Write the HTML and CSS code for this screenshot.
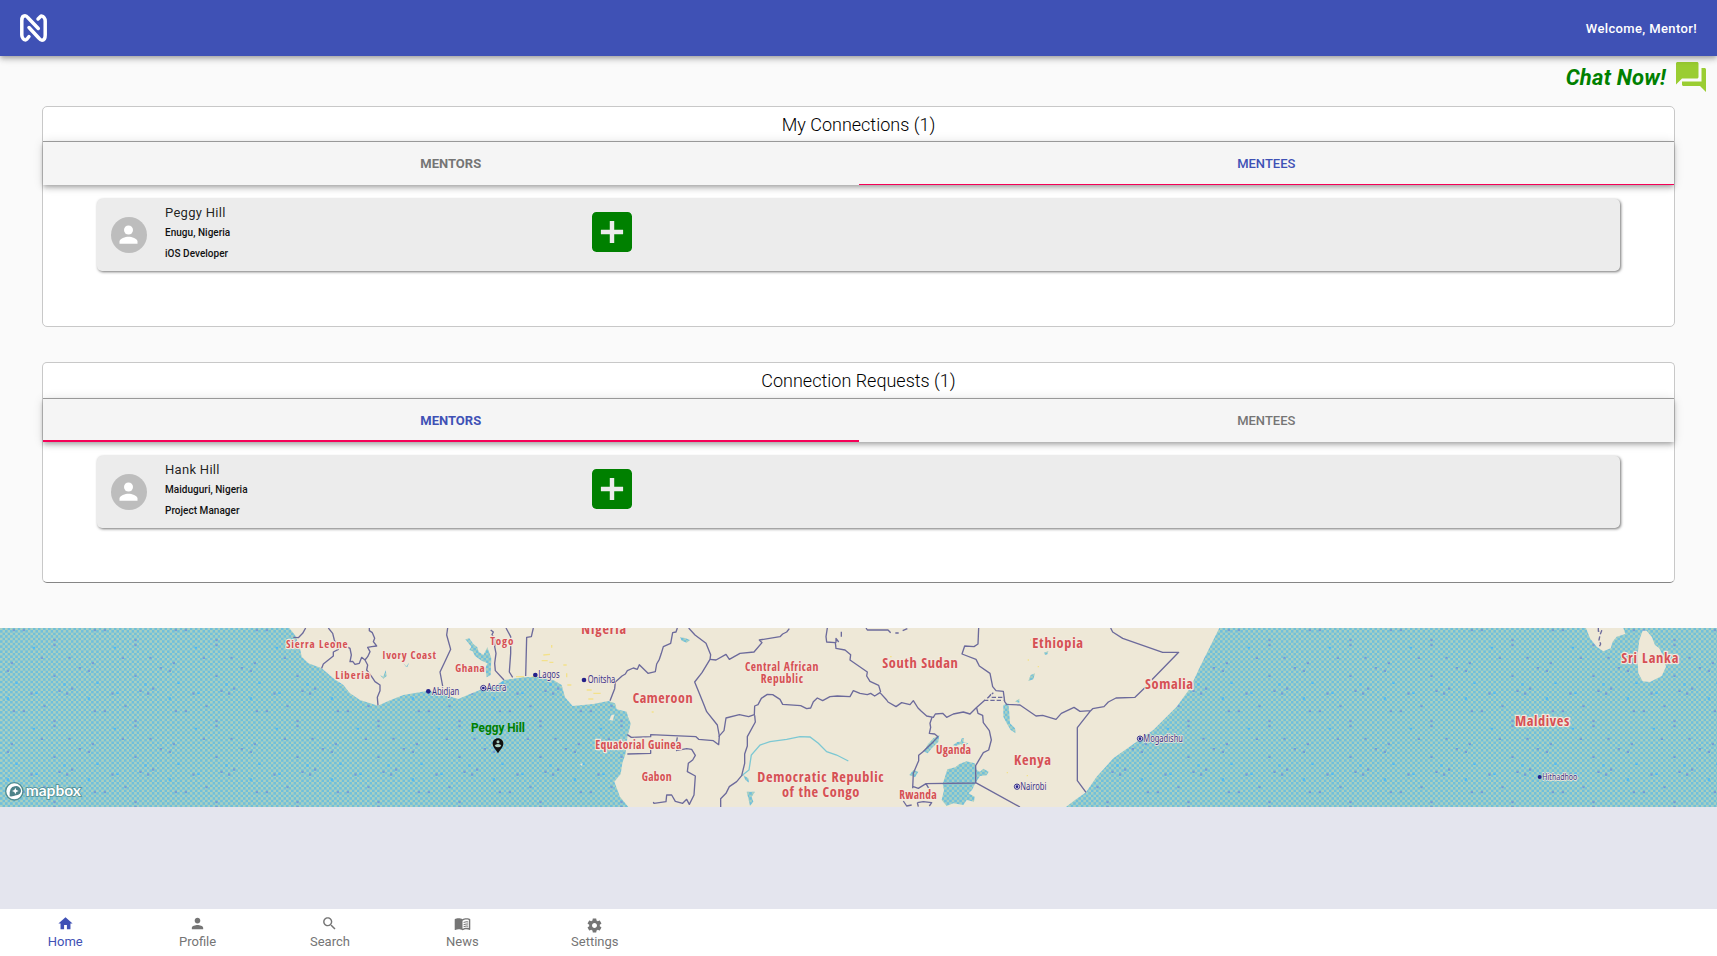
FILE: index.html
```html
<!DOCTYPE html>
<html lang="en">
<head>
<meta charset="utf-8">
<title>Mentor Home</title>
<link rel="stylesheet" href="styles.css">
</head>
<body>
<header class="appbar">
  <svg class="logo" viewBox="0 0 27 28" fill="none" stroke="#fff" stroke-width="3.5" stroke-linecap="round" stroke-linejoin="round"><path d="M9 22.5L7 25Q5 27 3 24.5Q1.800 23 1.800 21V6.500Q1.800 1.800 5 1.800Q6.500 1.800 8 3.800L18.300 14.500"/><path d="M18 5L20 3Q22 1 24 3.500Q25.200 5 25.200 7V21Q25.200 26.200 22 26.200Q20.500 26.200 19 24.200L9 13.500"/></svg>
  <span class="welcome">Welcome, Mentor!</span>
</header>
<div class="chat">
  <span class="chat-text">Chat Now!</span>
  <svg class="chat-icon" viewBox="2 2 20 20"><path d="M21 6h-2v9H6v2c0 .55.45 1 1 1h11l4 4V7c0-.55-.45-1-1-1zm-4 6V3c0-.55-.45-1-1-1H3c-.55 0-1 .45-1 1v14l4-4h10c.55 0 1-.45 1-1z"/></svg>
</div>
<main class="cards">
  <section class="card">
    <h2 class="card-title">My Connections (1)</h2>
    <div class="tabs">
      <div class="tab strong">MENTORS</div>
      <div class="tab active thin">MENTEES</div>
    </div>
    <div class="person">
      <svg class="avatar" viewBox="0 0 36 36"><circle cx="18" cy="18" r="18" fill="#bdbdbd"/><circle cx="17.500" cy="13" r="4.500" fill="#fff"/><path fill="#fff" d="M8.500 26.800v-2.300c0-3 6-4.700 9-4.700s9 1.700 9 4.700v2.300z"/></svg>
      <div class="info"><div class="name">Peggy Hill</div><div class="meta">Enugu, Nigeria</div><div class="meta">iOS Developer</div></div>
      <svg class="add" viewBox="3 3 18 18"><path d="M19 3H5c-1.110 0-2 .9-2 2v14c0 1.100.89 2 2 2h14c1.100 0 2-.9 2-2V5c0-1.100-.9-2-2-2zm-2 10h-4v4h-2v-4H7v-2h4V7h2v4h4v2z"/></svg>
    </div>
  </section>
  <section class="card last">
    <h2 class="card-title">Connection Requests (1)</h2>
    <div class="tabs">
      <div class="tab active strong">MENTORS</div>
      <div class="tab">MENTEES</div>
    </div>
    <div class="person">
      <svg class="avatar" viewBox="0 0 36 36"><circle cx="18" cy="18" r="18" fill="#bdbdbd"/><circle cx="17.500" cy="13" r="4.500" fill="#fff"/><path fill="#fff" d="M8.500 26.800v-2.300c0-3 6-4.700 9-4.700s9 1.700 9 4.700v2.300z"/></svg>
      <div class="info"><div class="name">Hank Hill</div><div class="meta">Maiduguri, Nigeria</div><div class="meta">Project Manager</div></div>
      <svg class="add" viewBox="3 3 18 18"><path d="M19 3H5c-1.110 0-2 .9-2 2v14c0 1.100.89 2 2 2h14c1.100 0 2-.9 2-2V5c0-1.100-.9-2-2-2zm-2 10h-4v4h-2v-4H7v-2h4V7h2v4h4v2z"/></svg>
    </div>
  </section>
</main>
<svg class="map" viewBox="0 24 5151 537" preserveAspectRatio="none">
  <defs>
    <pattern id="check" width="15.1875" height="15.1875" patternUnits="userSpaceOnUse"><rect width="15.2" height="15.2" fill="#a9d0c1"/><rect width="7.600" height="7.600" fill="#70bfdb"/><rect x="7.600" y="7.600" width="7.600" height="7.600" fill="#70bfdb"/></pattern>
    <pattern id="specks" width="243" height="243" patternUnits="userSpaceOnUse"><path fill="#779fd2" d="M38 27h7v7h-7zM68 27h7v7h-7zM160 57h7v7h-7zM160 72h7v7h-7zM205 110h7v7h-7zM32 126h7v7h-7zM236 141h7v7h-7zM122 110h7v7h-7zM20 149h7v7h-7zM175 209h7v7h-7zM213 202h7v7h-7zM198 217h7v7h-7zM160 164h7v7h-7zM91 217h7v7h-7zM130 12h7v7h-7z"/><path fill="#55baf0" d="M20 232h7v9h-7zM106 215h7v7h-7zM98 80h7v7h-7zM190 190h7v7h-7zM46 185h7v7h-7z"/></pattern>
  </defs>
  <rect y="24" width="5151" height="537" fill="url(#check)"/>
  <rect y="24" width="5151" height="537" fill="url(#specks)"/>
  <g class="land">
    <path d="M868 24L885 45L900 85L905 110L925 130L965 145L1000 175L1030 195L1050 220L1080 240L1134 257L1165 243L1210 225L1285 212L1335 225L1375 237L1410 222L1440 210L1490 195L1512 180L1570 172L1610 170L1660 180L1685 195L1695 232L1718 258L1780 252L1825 243L1845 250L1850 268L1880 275L1884 290L1892 310L1888 330L1883 345L1877 400L1867 430L1862 462L1843 485L1860 530L1885 561H3198L3225 540L3258 517L3290 470L3340 415L3410 365L3460 330L3530 260L3570 205L3600 140L3630 80L3658 24Z"/>
    <path d="M4758 24L4770 55L4790 80L4810 94L4832 85L4838 65L4850 50L4876 42L4870 24ZM4928 32L4940 32L4955 50L4965 75L4978 85L4990 110L4998 140L4985 168L4950 186L4928 184L4915 160L4912 110L4918 60ZM1828 300L1835 284L1843 284L1838 302ZM1740 433L1748 430L1746 438Z"/>
  </g>
  <g class="lakes">
    <path d="M1396 58L1408 55L1420 72L1432 82L1436 95L1450 105L1458 90L1462 82L1474 115L1472 165L1460 172L1456 145L1462 130L1445 122L1425 108L1418 94L1408 90L1414 80Z"/>
    <path d="M2040 52L2055 54L2070 60L2060 68L2045 62ZM1140 165L1150 170L1157 150L1160 168L1150 176ZM1210 130L1218 140L1227 128L1222 142Z"/>
    <path d="M2835 470L2842 448L2866 442L2878 432L2900 424L2924 430L2930 450L2940 455L2950 446L2966 455L2960 466L2940 468L2926 490L2916 510L2906 520L2924 530L2922 545L2900 540L2890 555L2860 550L2840 558L2825 540L2832 510L2828 492ZM2772 395L2782 375L2800 355L2818 345L2815 365L2795 385L2783 400ZM2728 465L2740 450L2755 455L2745 472ZM2858 376L2872 366L2882 365L2885 355L2892 355L2890 366L2905 370L2895 378L2882 372L2868 378Z"/>
    <path d="M3010 255L3025 250L3028 280L3030 310L3045 325L3047 340L3032 330L3020 310L3010 290ZM3132 98L3145 93L3142 103L3135 105ZM3085 183L3092 165L3105 160L3100 178ZM3045 245L3058 236L3058 248Z"/>
    <path d="M2240 515L2265 515L2255 530L2260 545L2250 558L2245 535ZM2230 465L2245 475L2247 488L2236 480Z"/>
    <path class="river" d="M2225 467L2247 450L2254 405L2280 375L2310 365L2360 358L2400 350L2430 351L2455 370L2480 395L2510 405L2545 423"/>
  </g>
  <path class="specks" d="M1655 75v8M1630 105l20-2M1625 122h18M1648 127h12M1690 135h10M1700 160v12M1702 195h12M1760 210h15M1765 237h15M1780 220h22M1955 276h6M1595 170h16M1548 170h24M3090 60h3M3083 120h4M3113 140h4M3080 467h4M3020 458h4M2670 110h5"/>
  <g class="borders">
    <path d="M917 24L908 40L895 53L880 52M985 24L998 40L1003 60L1015 88L1000 96V108L970 132L965 145M1040 80L1050 85L1054 105L1050 125L1058 124L1065 133L1078 130L1085 112L1095 120L1103 110L1110 95L1103 82L1115 80L1130 78L1120 65L1124 55L1117 38L1108 32V24M1095 120L1103 135L1100 150L1115 170L1125 185L1140 195V212L1132 232L1134 256"/>
    <path d="M1343 24L1340 45L1352 88L1336 122L1320 156L1328 198M1472 30L1480 36L1476 44L1486 60L1484 80L1488 100L1484 130L1486 152L1512 180M1518 24L1532 50V100L1528 156L1538 172M1600 24L1594 50L1580 52L1577 168M2032 24L2028 36L2018 38L2012 70L1990 80L1984 100L1978 118L1970 132L1966 155L1944 160L1924 140L1918 134L1912 148L1900 144L1882 152L1876 162L1866 168L1846 186L1844 206L1830 242"/>
    <path d="M2066 24L2085 45L2118 70L2132 104L2130 118L2106 158L2084 186L2096 215L2110 250L2120 275L2152 315L2158 348L2156 374L2140 362L2096 358L2088 350L1952 344V350L1894 352L1882 344M1952 384V400L1882 402M2032 352L2028 374M2028 392L2060 386L2075 388L2086 406L2078 420L2065 430L2062 455L2086 468L2082 525L2068 553L2060 538L2048 550L2026 544L2015 525H2000L1998 545L1962 550L1960 546"/>
    <path d="M2130 118L2148 120L2178 103L2188 118L2220 100L2262 96L2286 68L2278 60L2340 50L2348 42L2360 36L2368 26M2156 350L2172 332L2178 294L2218 284L2246 290L2263 284L2264 258L2274 254L2284 235L2302 223L2318 224L2340 238L2348 253L2402 257L2420 266L2432 264L2440 245L2452 234L2468 242L2490 230L2512 228L2550 230L2560 212L2580 220L2602 224L2612 220L2624 228L2640 218L2660 240L2664 246L2688 260L2705 248L2730 254L2740 242L2754 264L2764 274L2780 288L2800 292L2806 282L2828 280L2840 292L2860 282L2890 276L2910 282L2928 264L2955 240M2264 286L2266 306L2242 350V378L2234 402V430L2225 467L2210 485L2188 500L2178 520L2162 536V561"/>
    <path d="M2482 24L2478 50L2480 66L2506 68L2508 85L2535 90L2552 104L2550 120L2602 156L2600 168L2610 184L2636 196L2642 216M2508 68V55L2516 66M2524 35V50M2598 24L2602 30H2664L2672 38M2686 39H2696M2708 32L2722 26M2936 24L2934 72L2922 80L2894 78L2886 102L2928 118L2938 138L2970 160L2978 200L2988 212L3010 214L3014 245L3020 253L3060 255L3108 288L3128 286L3168 298L3184 280L3222 262L3240 274L3272 272L3278 266L3312 260L3325 246L3348 234L3405 232L3440 198M3332 24L3338 36L3368 55L3488 97H3536L3455 180M3272 272L3232 323V482L3258 517M2930 264L2934 280L2948 286L2950 308L2968 332L2974 360L2966 390L2950 398L2927 437V488L3060 561M2927 489L2778 491L2755 505L2740 500M2796 292L2790 310L2792 322L2788 340L2804 342L2814 350L2800 365L2768 396L2756 406V422L2740 460L2738 505M2778 491L2788 508"/>
    <path class="dash" d="M2952 241H3010M2965 233L2975 220M2975 232L3000 232L3014 232M2962 235L2980 218"/>
    <path class="dash" d="M4795 24V34L4805 32L4800 45L4797 60L4802 72L4796 84"/>
    <path d="M2710 543L2720 558L2735 555M2752 548L2770 545L2795 548L2788 558M2752 548L2755 560"/>
  </g>
  <g class="country">
    <text x="858" y="84" textLength="185" font-size="33">Sierra Leone</text>
    <text x="1006" y="176" textLength="104" font-size="33">Liberia</text>
    <text x="1147" y="117" textLength="161" font-size="33">Ivory Coast</text>
    <text x="1366" y="157" textLength="88" font-size="33">Ghana</text>
    <text x="1471" y="75" textLength="69" font-size="33">Togo</text>
    <text x="1744" y="43" textLength="134" font-size="42">Nigeria</text>
    <text x="1898" y="250" textLength="180" font-size="42">Cameroon</text>
    <text x="1786" y="386" textLength="258" font-size="35">Equatorial Guinea</text>
    <text x="1925" y="482" textLength="90" font-size="35">Gabon</text>
    <text x="2235" y="154" textLength="220" font-size="35">Central African</text>
    <text x="2282" y="189" textLength="127" font-size="35">Republic</text>
    <text x="2647" y="144" textLength="226" font-size="43">South Sudan</text>
    <text x="2272" y="487" textLength="379" font-size="43">Democratic Republic</text>
    <text x="2346" y="531" textLength="232" font-size="43">of the Congo</text>
    <text x="2808" y="401" textLength="105" font-size="35">Uganda</text>
    <text x="2698" y="537" textLength="112" font-size="35">Rwanda</text>
    <text x="3097" y="84" textLength="152" font-size="43">Ethiopia</text>
    <text x="3435" y="208" textLength="144" font-size="43">Somalia</text>
    <text x="3042" y="436" textLength="111" font-size="43">Kenya</text>
    <text x="4864" y="129" textLength="171" font-size="43">Sri Lanka</text>
    <text x="4545" y="319" textLength="163" font-size="43">Maldives</text>
  </g>
  <g class="city">
    <text x="1296" y="224" textLength="82" lengthAdjust="spacingAndGlyphs">Abidjan</text>
    <text x="1460" y="214" textLength="59" lengthAdjust="spacingAndGlyphs">Accra</text>
    <text x="1615" y="175" textLength="64" lengthAdjust="spacingAndGlyphs">Lagos</text>
    <text x="1763" y="188" textLength="83" lengthAdjust="spacingAndGlyphs">Onitsha</text>
    <text x="3430" y="365" textLength="119" lengthAdjust="spacingAndGlyphs">Mogadishu</text>
    <text x="3061" y="509" textLength="78" lengthAdjust="spacingAndGlyphs">Nairobi</text>
    <text x="4627" y="479" textLength="105" lengthAdjust="spacingAndGlyphs" font-size="28">Hithadhoo</text>
  </g>
  <g class="dots"><circle cx="1285" cy="214" r="7"/><circle cx="1606" cy="165" r="7"/><circle cx="1752" cy="180" r="7"/><circle cx="4619" cy="471" r="6"/></g>
  <g class="capitals"><circle cx="1450" cy="204" r="8"/><circle cx="3420" cy="356" r="8"/><circle cx="3051" cy="500" r="8"/></g>
  <g class="capital-dots"><circle cx="1450" cy="204" r="4"/><circle cx="3420" cy="356" r="4"/><circle cx="3051" cy="500" r="4"/></g>
  <text class="marker-name" x="1413" y="336" textLength="162" lengthAdjust="spacingAndGlyphs">Peggy Hill</text>
  <g transform="translate(1478 355)"><path fill="#111" d="M16 0C7 0 0 7 0 16C0 27 11 35 16 45C21 35 32 27 32 16C32 7 25 0 16 0Z"/><circle cx="16" cy="10" r="4.500" fill="#a9d0c1"/><path fill="#a9d0c1" d="M6 22Q8 17 16 17T26 22Q22 27 16 27T6 22Z"/></g>
  <g class="mapbox"><circle cx="43" cy="514" r="26" fill="#fff" stroke="#518d91" stroke-width="4"/><path fill="#4d8288" d="M29 529Q27 500 44 499A14 14 0 1 1 48 526Q40 530 29 529Z"/><path fill="#fff" d="M46 503L49 510L56 513L49 516L46 523L43 516L36 513L43 510Z"/><text x="77" y="528" textLength="166" lengthAdjust="spacingAndGlyphs">mapbox</text></g>
</svg>
<nav class="nav">
  <a class="nav-item current"><svg viewBox="0 0 24 24"><path d="M10 20v-6h4v6h5v-8h3L12 3 2 12h3v8z"/></svg><span>Home</span></a>
  <a class="nav-item"><svg viewBox="0 0 24 24"><path d="M12 12c2.210 0 4-1.790 4-4s-1.790-4-4-4-4 1.790-4 4 1.790 4 4 4zm0 2c-2.670 0-8 1.340-8 4v2h16v-2c0-2.660-5.330-4-8-4z"/></svg><span>Profile</span></a>
  <a class="nav-item"><svg viewBox="0 0 24 24"><path d="M15.500 14h-.79l-.28-.27C15.410 12.590 16 11.110 16 9.500 16 5.910 13.090 3 9.500 3S3 5.910 3 9.500 5.910 16 9.500 16c1.610 0 3.090-.59 4.230-1.570l.27.28v.79l5 4.990L20.490 19l-4.990-5zm-6 0C7.010 14 5 11.990 5 9.500S7.010 5 9.500 5 14 7.010 14 9.500 11.990 14 9.500 14z"/></svg><span>Search</span></a>
  <a class="nav-item"><svg viewBox="0 0 24 24"><path fill-rule="evenodd" d="M21 5c-1.110-.35-2.330-.5-3.500-.5-1.950 0-4.050.4-5.500 1.500-1.450-1.100-3.550-1.500-5.500-1.500S2.450 4.900 1 6v14.650c0 .25.250.5.500.5.100 0 .15-.05.250-.05C3.100 20.450 5.050 20 6.500 20c1.950 0 4.050.4 5.500 1.500 1.350-.85 3.800-1.500 5.500-1.500 1.650 0 3.350.3 4.750 1.050.1.050.15.050.250.050.250 0 .5-.25.5-.5V6c-.6-.45-1.250-.75-2-1zm0 13.500c-1.100-.35-2.300-.5-3.500-.5-1.700 0-4.150.65-5.500 1.500V8c1.350-.85 3.800-1.500 5.500-1.500 1.200 0 2.400.15 3.500.5v11.500z"/><path d="M13.500 10Q16.500 8.500 20 9v1.500q-3.500-.5-6.500.8zM13.500 13Q16.500 11.500 20 12v1.500q-3.500-.5-6.500.8zM13.500 16Q16.500 14.500 20 15v1.500q-3.500-.5-6.500.8z"/></svg><span>News</span></a>
  <a class="nav-item"><svg class="gear" viewBox="0 0 24 24"><path d="M19.430 12.980c.04-.32.07-.64.07-.98s-.03-.66-.07-.98l2.110-1.650c.19-.15.24-.42.12-.64l-2-3.460c-.12-.22-.39-.3-.61-.22l-2.490 1c-.52-.4-1.080-.73-1.690-.98l-.38-2.650C14.460 2.180 14.250 2 14 2h-4c-.25 0-.46.18-.49.42l-.38 2.650c-.61.25-1.170.59-1.690.98l-2.490-1c-.23-.09-.49 0-.61.22l-2 3.460c-.13.22-.07.49.12.64l2.110 1.650c-.04.32-.07.65-.07.98s.03.66.07.98l-2.110 1.650c-.19.15-.24.42-.12.64l2 3.460c.12.22.39.3.61.22l2.490-1c.52.4 1.080.73 1.690.98l.38 2.650c.03.24.24.42.49.42h4c.25 0 .46-.18.49-.42l.38-2.650c.61-.25 1.170-.59 1.690-.98l2.490 1c.23.09.49 0 .61-.22l2-3.460c.12-.22.07-.49-.12-.64l-2.110-1.650zM12 15.500c-1.930 0-3.500-1.570-3.500-3.500s1.570-3.500 3.500-3.500 3.500 1.570 3.500 3.500-1.570 3.500-3.500 3.500z"/></svg><span>Settings</span></a>
</nav>
</body>
</html>
```
FILE: styles.css
```css
* { box-sizing: border-box; }
body { margin: 0; height: 956px; overflow: hidden; display: flex; flex-direction: column; background: #e4e5ee; font-family: Roboto, sans-serif; color: rgba(0,0,0,.87); }
.appbar { height: 56px; flex: none; display: flex; align-items: center; justify-content: space-between; padding: 0 20px; background: #3f51b5; box-shadow: 0 2px 4px -1px rgba(0,0,0,.2), 0 4px 5px rgba(0,0,0,.14), 0 1px 10px rgba(0,0,0,.12); z-index: 1; }
.logo { width: 27px; height: 28px; display: block; }
.welcome { color: #fff; font-size: 13px; font-weight: 500; letter-spacing: .37px; line-height: 20px; padding-top: 1px; }
.chat { height: 50px; flex: none; background: #fafafa; display: flex; justify-content: flex-end; align-items: flex-start; padding: 6px 11px 0 0; gap: 10px; }
.chat-text { font-size: 22px; font-weight: 700; font-style: italic; color: green; line-height: 32px; letter-spacing: .2px; }
.chat-icon { width: 30px; height: 30px; fill: #9acd32; }
.cards { height: 522px; flex: none; background: #fafafa; padding: 0 42px; display: flex; flex-direction: column; gap: 35px; }
.card { height: 221px; border: 1px solid #c8c8c8; border-radius: 5px; background: #fff; }
.card.last { border-bottom-color: #858585; }
.card-title { margin: 0; height: 34px; font-size: 18px; font-weight: 300; line-height: 35px; text-align: center; color: #000; }
.last .card-title { height: 35px; line-height: 36px; }
.tabs { height: 44px; border-top: 1px solid #999; display: flex; background: #f5f5f5; box-shadow: 0 2px 4px -1px rgba(0,0,0,.2), 0 4px 5px rgba(0,0,0,.14), 0 1px 10px rgba(0,0,0,.12); }
.tab { flex: 1; height: 43px; line-height: 43px; text-align: center; font-size: 13px; font-weight: 500; color: #757575; border-bottom: 0 solid #f50057; }
.tab.strong { font-weight: 700; }
.tab.active { color: #3f51b5; border-bottom-width: 2px; }
.tab.active.thin { border-bottom-width: 1px; }
.person { width: 1523px; height: 72px; margin: 14px 0 0 54px; border-radius: 5px; background: #ececec; box-shadow: 1px 1px 3px rgba(0,0,0,.55); display: flex; align-items: flex-start; position: relative; padding-left: 14px; }
.avatar { width: 36px; height: 36px; margin: 18px 18px 0 0; }
.info { width: 427px; padding-top: 4px; }
.name { font-size: 13px; line-height: 20px; letter-spacing: .3px; }
.meta { font-size: 10px; font-weight: 500; line-height: 21px; color: #111; letter-spacing: .03px; position: relative; top: -1px; }
.add { width: 40px; height: 40px; margin-top: 13px; fill: green; }
.map { display: block; width: 1717px; height: 179px; flex: none; overflow: hidden; }
.land { fill: #eee8d7; }
.lakes { fill: url(#check); }
.lakes .river { fill: none; stroke: #7cc8d3; stroke-width: 4; }
.specks { stroke: #f3e18b; stroke-width: 4; fill: none; }
.borders { fill: none; stroke: #6c6a9b; stroke-width: 4; stroke-linejoin: round; }
.dash { stroke-dasharray: 13 6; }
.country, .city { paint-order: stroke; stroke: #f2e9dd; stroke-linejoin: round; }
.country text { font-family: "Open Sans Condensed", "Noto Sans", sans-serif; font-weight: 700; fill: #d65054; stroke-width: 7px; }
.city { font-family: "Noto Sans", sans-serif; font-size: 31px; fill: #3b3488; stroke-width: 5px; }
.dots, .capital-dots { fill: #24208a; }
.capitals { fill: #e8e2ee; stroke: #3b3488; stroke-width: 3; }
.marker-name { font-family: Roboto, sans-serif; font-size: 38px; font-weight: 700; fill: green; }
.mapbox text { font-family: Lato, sans-serif; font-size: 47px; font-weight: 700; fill: #fff; stroke: #518d91; stroke-width: 5; paint-order: stroke; }
.nav { height: 47px; flex: none; margin-top: auto; background: #fff; display: flex; }
.nav-item { width: 132.4px; display: flex; flex-direction: column; align-items: center; font-size: 13px; line-height: 15px; color: #757575; padding: 6px 2px 0 0; }
.nav-item svg { width: 17px; height: 17px; fill: currentColor; margin-bottom: 2px; }
.nav-item .gear { position: relative; top: 2px; }
.nav-item.current { color: #3f51b5; }
```
